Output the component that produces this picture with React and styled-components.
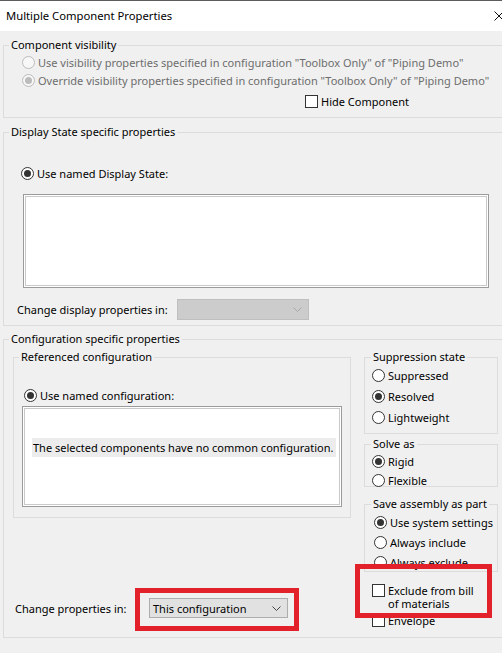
import React from 'react'
import styled, { createGlobalStyle } from 'styled-components'

const GlobalStyle = createGlobalStyle`
  html, body {
    margin: 0;
    padding: 0;
    background: #f0f0f0;
    overflow: hidden;
  }
  body {
    font-family: "Noto Sans", "Open Sans", sans-serif;
    font-size: 11px;
    color: #000;
  }
`

const Window = styled.div`
  position: relative;
  width: 502px;
  height: 653px;
  overflow: hidden;
  background: #f0f0f0;
`
const TitleBar = styled.div`
  display: flex;
  align-items: center;
  justify-content: space-between;
  height: 30px;
  padding-left: 6px;
  border-top: 1px solid #5c5c5c;
  background: #fff;
`
const Title = styled.div`
  font-size: 11.25px;
  line-height: 16px;
`
const Close = styled.svg`
  margin-right: -2px;
  margin-top: -1px;
`
const Body = styled.div`
  width: 508px;
  padding: 6px 0 0 3px;
`
const Group = styled.fieldset`
  box-sizing: border-box;
  min-width: 0;
  margin: ${(p) => p.$mt || 0}px 0 0 0;
  padding: 0;
  border: 1px solid #dcdcdc;
  height: ${(p) => p.$h}px;
  width: ${(p) => (p.$w ? `${p.$w}px` : 'auto')};
`
const Legend = styled.legend`
  margin-left: ${(p) => p.$ml ?? 5}px;
  padding: 0 2px;
  height: 16px;
  line-height: 16px;
  white-space: nowrap;
`
const Option = styled.label`
  display: flex;
  align-items: ${(p) => (p.$top ? 'flex-start' : 'center')};
  gap: 3px;
  height: ${(p) => (p.$h ? `${p.$h}px` : 'auto')};
  margin: ${(p) => p.$mt || 0}px 0 0 ${(p) => p.$ml || 0}px;
  color: ${(p) => (p.$disabled ? '#6d6d6d' : '#000')};
  white-space: nowrap;
`
const RadioCircle = styled.span`
  box-sizing: border-box;
  display: flex;
  align-items: center;
  justify-content: center;
  flex-shrink: 0;
  width: 13px;
  height: 13px;
  border-radius: 50%;
  border: 1px solid ${(p) => (p.$disabled ? '#bcbcbc' : '#333')};
  background: ${(p) => (p.$disabled ? '#f7f7f7' : '#fff')};
  &::after {
    content: '';
    display: ${(p) => (p.$checked ? 'block' : 'none')};
    width: 7px;
    height: 7px;
    border-radius: 50%;
    background: ${(p) => (p.$disabled ? '#bcbcbc' : '#333')};
  }
`
const CheckBox = styled.span`
  box-sizing: border-box;
  flex-shrink: 0;
  width: 13px;
  height: 13px;
  border: 1px solid #333;
  background: #fff;
`
const CheckText = styled.span`
  line-height: 13px;
`
const ListBox = styled.div`
  box-sizing: border-box;
  width: ${(p) => p.$w}px;
  height: ${(p) => p.$h}px;
  margin: ${(p) => p.$mt || 0}px 0 0 ${(p) => p.$ml || 0}px;
  padding-top: ${(p) => p.$pt || 0}px;
  background: #fff;
  border: 1px solid #9b9b9b;
  box-shadow: inset 0 0 0 1px #fff, inset 0 0 0 2px #c9c9c9;
`
const ListMessage = styled.div`
  margin-left: 9px;
  padding-left: 1px;
  width: 303px;
  height: 19px;
  line-height: 19px;
  background: #ececec;
  white-space: nowrap;
`
const FieldRow = styled.div`
  display: flex;
  align-items: center;
  height: ${(p) => p.$h}px;
  margin: ${(p) => p.$mt || 0}px 0 0 ${(p) => p.$ml || 0}px;
`
const FieldLabel = styled.span`
  width: ${(p) => p.$w}px;
  white-space: nowrap;
`
const Select = styled.div`
  box-sizing: border-box;
  display: flex;
  align-items: center;
  justify-content: space-between;
  width: ${(p) => p.$w}px;
  height: ${(p) => p.$h}px;
  padding: 0 6px 0 3px;
  background: ${(p) => (p.$disabled ? '#cccccc' : '#e1e1e1')};
  border: 1px solid ${(p) => (p.$disabled ? '#bfbfbf' : '#adadad')};
  white-space: nowrap;
`
const Columns = styled.div`
  display: flex;
  gap: 13px;
  padding-left: 9px;
`
const Column = styled.div`
  display: flex;
  flex-direction: column;
  width: ${(p) => p.$w}px;
`
const Annotation = styled.div`
  position: absolute;
  box-sizing: border-box;
  left: ${(p) => p.$x}px;
  top: ${(p) => p.$y}px;
  width: ${(p) => p.$w}px;
  height: ${(p) => p.$h}px;
  border: 5px solid #e2212a;
  pointer-events: none;
`

const Chevron = ({ color }) => (
  <svg width="9" height="5" viewBox="0 0 9 5">
    <polyline points="0.5,0.5 4.5,4.5 8.5,0.5" fill="none" stroke={color} strokeWidth="1" />
  </svg>
)

const Radio = ({ label, checked, disabled, h, ml, mt }) => (
  <Option $h={h} $ml={ml} $mt={mt} $disabled={disabled}>
    <RadioCircle $checked={checked} $disabled={disabled} />
    {label}
  </Option>
)

const Check = ({ children, ml, mt }) => (
  <Option $top $ml={ml} $mt={mt}>
    <CheckBox />
    <CheckText>{children}</CheckText>
  </Option>
)

const App = () => (
  <Window>
    <GlobalStyle />
    <TitleBar>
      <Title>Multiple Component Properties</Title>
      <Close width="10" height="10" viewBox="0 0 10 10">
        <path d="M0.5 0.5 L9.5 9.5 M9.5 0.5 L0.5 9.5" stroke="#111" strokeWidth="1" />
      </Close>
    </TitleBar>

    <Body>
      <Group $h={81}>
        <Legend>Component visibility</Legend>
        <Radio
          disabled
          h={18}
          ml={18}
          label={'Use visibility properties specified in configuration "Toolbox Only" of "Piping Demo"'}
        />
        <Radio
          disabled
          checked
          h={18}
          ml={18}
          label={'Override visibility properties specified in configuration "Toolbox Only" of "Piping Demo"'}
        />
        <Check ml={301} mt={6}>Hide Component</Check>
      </Group>

      <Group $h={202} $mt={6}>
        <Legend>Display State specific properties</Legend>
        <Radio checked h={18} ml={17} mt={24} label="Use named Display State:" />
        <ListBox $w={466} $h={94} $mt={12} $ml={19} />
        <FieldRow $h={21} $mt={11} $ml={13}>
          <FieldLabel $w={160}>Change display properties in:</FieldLabel>
          <Select $disabled $w={132} $h={21}>
            <span />
            <Chevron color="#a8a8a8" />
          </Select>
        </FieldRow>
      </Group>

      <Group $h={307} $mt={5}>
        <Legend>Configuration specific properties</Legend>
        <Columns>
          <Column $w={338}>
            <Group $h={169} $w={338} $mt={2}>
              <Legend>Referenced configuration</Legend>
              <Radio checked h={18} ml={10} mt={21} label="Use named configuration:" />
              <ListBox $w={320} $h={101} $mt={2} $ml={8} $pt={31}>
                <ListMessage>The selected components have no common configuration.</ListMessage>
              </ListBox>
            </Group>
            <FieldRow $h={20} $mt={80} $ml={2}>
              <FieldLabel $w={134}>Change properties in:</FieldLabel>
              <Select $w={139} $h={20}>
                This configuration
                <Chevron color="#444" />
              </Select>
            </FieldRow>
          </Column>

          <Column $w={134}>
            <Group $h={85} $mt={2}>
              <Legend $ml={6}>Suppression state</Legend>
              <Radio h={21} ml={7} label="Suppressed" />
              <Radio checked h={21} ml={7} label="Resolved" />
              <Radio h={21} ml={7} label="Lightweight" />
            </Group>
            <Group $h={51} $mt={2}>
              <Legend $ml={6}>Solve as</Legend>
              <Radio checked h={19} ml={7} label="Rigid" />
              <Radio h={19} ml={7} label="Flexible" />
            </Group>
            <Group $h={76} $mt={9}>
              <Legend $ml={6}>Save assembly as part</Legend>
              <Radio checked h={20} ml={9} label="Use system settings" />
              <Radio h={20} ml={9} label="Always include" />
              <Radio h={20} ml={9} label="Always exclude" />
            </Group>
            <Check ml={8} mt={12}>
              Exclude from bill
              <br />
              of materials
            </Check>
            <Check ml={8} mt={4}>Envelope</Check>
          </Column>
        </Columns>
      </Group>
    </Body>

    <Annotation $x={355} $y={564} $w={137} $h={54} />
    <Annotation $x={135} $y={588} $w={164} $h={43} />
  </Window>
)

export default App
